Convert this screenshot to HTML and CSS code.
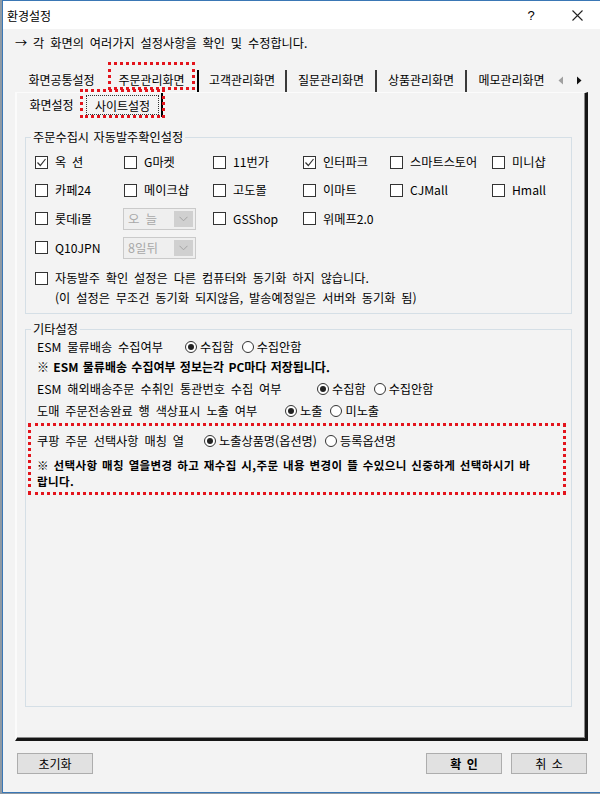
FILE: index.html
```html
<!DOCTYPE html>
<html lang="ko">
<head>
    <meta charset="UTF-8">
    <meta name="viewport" content="width=device-width, initial-scale=1.0">
    <title>환경설정</title>
    <link rel="stylesheet" href="styles.css">
</head>
<body>
<div class="window">
    <div class="titlebar">
        <span class="title">환경설정</span>
        <span class="cap-btn help">?</span>
        <span class="cap-btn close">
            <svg width="11" height="11" viewBox="0 0 11 11"><path d="M0.5 0.5L10.5 10.5M10.5 0.5L0.5 10.5" stroke="#222" stroke-width="1.1" fill="none"/></svg>
        </span>
    </div>

    <div class="desc">→ 각 화면의 여러가지 설정사항을 확인 및 수정합니다.</div>

    <div class="tabs-main">
        <div class="tab t1">화면공통설정</div>
        <div class="tab t2 selected marked">주문관리화면</div>
        <div class="tab t3 sep">고객관리화면</div>
        <div class="tab t4 sep">질문관리화면</div>
        <div class="tab t5 sep">상품관리화면</div>
        <div class="tab t6">메모관리화면</div>
        <div class="tab-scroll">
            <svg width="6" height="9" viewBox="0 0 6 9"><path d="M5 0.5V8.5L0.5 4.5Z" fill="#a0a0a0"/></svg>
            <svg width="6" height="9" viewBox="0 0 6 9"><path d="M1 0.5V8.5L5.5 4.5Z" fill="#111"/></svg>
        </div>
    </div>

    <div class="panel">
        <div class="tabs-sub">
            <div class="subtab s1">화면설정</div>
            <div class="subtab s2 selected marked"><span class="focus">사이트설정</span></div>
        </div>

        <fieldset class="group group-auto">
            <legend>주문수집시 자동발주확인설정</legend>
            <div class="mall-grid">
                <label class="chk"><span class="box"><svg width="11" height="11" viewBox="0 0 11 11"><path d="M1.5 5.5L4.3 8.5L9.5 2" stroke="#333" stroke-width="1.2" fill="none"/></svg></span>옥 션</label>
                <label class="chk"><span class="box"></span>G마켓</label>
                <label class="chk"><span class="box"></span>11번가</label>
                <label class="chk"><span class="box"><svg width="11" height="11" viewBox="0 0 11 11"><path d="M1.5 5.5L4.3 8.5L9.5 2" stroke="#333" stroke-width="1.2" fill="none"/></svg></span>인터파크</label>
                <label class="chk"><span class="box"></span>스마트스토어</label>
                <label class="chk"><span class="box"></span>미니샵</label>

                <label class="chk"><span class="box"></span>카페24</label>
                <label class="chk"><span class="box"></span>메이크샵</label>
                <label class="chk"><span class="box"></span>고도몰</label>
                <label class="chk"><span class="box"></span>이마트</label>
                <label class="chk"><span class="box"></span>CJMall</label>
                <label class="chk"><span class="box"></span>Hmall</label>

                <label class="chk"><span class="box"></span>롯데i몰</label>
                <div class="combo"><span class="val">오 늘</span><span class="arrow"><svg width="9" height="6" viewBox="0 0 9 6"><path d="M0.5 0.8L4.5 4.8L8.5 0.8" stroke="#a3a3a3" fill="none"/></svg></span></div>
                <label class="chk"><span class="box"></span>GSShop</label>
                <label class="chk"><span class="box"></span>위메프2.0</label>
                <span></span>
                <span></span>

                <label class="chk"><span class="box"></span>Q10JPN</label>
                <div class="combo"><span class="val">8일뒤</span><span class="arrow"><svg width="9" height="6" viewBox="0 0 9 6"><path d="M0.5 0.8L4.5 4.8L8.5 0.8" stroke="#a3a3a3" fill="none"/></svg></span></div>
            </div>
            <div class="sync-note">
                <label class="chk"><span class="box"></span>자동발주 확인 설정은 다른 컴퓨터와 동기화 하지 않습니다.</label>
                <div class="sub-text">(이 설정은 무조건 동기화 되지않음, 발송예정일은 서버와 동기화 됨)</div>
            </div>
        </fieldset>

        <fieldset class="group group-etc">
            <legend>기타설정</legend>
            <div class="opt-row row-esm">
                <span class="opt-label w-esm">ESM 물류배송 수집여부</span>
                <span class="radio on"></span><span class="opt">수집함</span>
                <span class="radio"></span><span class="opt">수집안함</span>
            </div>
            <div class="note note-esm">※ ESM 물류배송 수집여부 정보는각 PC마다 저장됩니다.</div>
            <div class="opt-row row-tall">
                <span class="opt-label w-abroad">ESM 해외배송주문 수취인 통관번호 수집 여부</span>
                <span class="radio on"></span><span class="opt">수집함</span>
                <span class="radio"></span><span class="opt">수집안함</span>
            </div>
            <div class="opt-row row-tall">
                <span class="opt-label w-wholesale">도매 주문전송완료 행 색상표시 노출 여부</span>
                <span class="radio on"></span><span class="opt">노출</span>
                <span class="radio"></span><span class="opt">미노출</span>
            </div>
            <div class="marked-box">
                <div class="opt-row row-tall">
                    <span class="opt-label w-coupang">쿠팡 주문 선택사항 매칭 열</span>
                    <span class="radio on"></span><span class="opt">노출상품명(옵션명)</span>
                    <span class="radio"></span><span class="opt">등록옵션명</span>
                </div>
                <div class="note note-coupang">※ 선택사항 매칭 열을변경 하고 재수집 시,주문 내용 변경이 뜰 수있으니 신중하게 선택하시기 바<br>랍니다.</div>
            </div>
        </fieldset>
    </div>

    <div class="footer">
        <button type="button" class="btn">초기화</button>
        <div class="btn-group">
            <button type="button" class="btn btn-ok">확 인</button>
            <button type="button" class="btn">취 소</button>
        </div>
    </div>
</div>
</body>
</html>
```

FILE: styles.css
```css
* {
    box-sizing: border-box;
}

html, body {
    margin: 0;
    padding: 0;
}

body {
    width: 600px;
    height: 794px;
    overflow: hidden;
    background: #8e9aa5;
    font-family: "Noto Sans CJK KR", "Noto Sans", sans-serif;
    font-size: 12.2px;
    word-spacing: 2.5px;
    color: #000;
}

.window {
    margin-left: 2px;
    width: 598px;
    height: 793px;
    border: 1px solid #3a77b5;
    border-right: none;
    background: #f3f3f3;
    display: flex;
    flex-direction: column;
}

/* title bar */
.titlebar {
    height: 28px;
    background: #fff;
    display: flex;
    align-items: center;
    flex-shrink: 0;
}
.title {
    padding-left: 4px;
    font-size: 12px;
}
.cap-btn {
    width: 46px;
    height: 28px;
    display: flex;
    align-items: center;
    justify-content: center;
}
.help {
    margin-left: auto;
    font-family: "Liberation Sans", sans-serif;
    font-size: 13px;
}

.desc {
    margin-top: 5px;
    padding-left: 12px;
    line-height: 18px;
}

/* top tabs */
.tabs-main {
    margin-top: 18px;
    margin-left: 14px;
    height: 22px;
    display: flex;
    flex-shrink: 0;
}
.tab {
    position: relative;
    height: 22px;
    line-height: 20px;
    text-align: center;
    font-size: 12px;
}
.t1 { width: 89px; }
.t2 { width: 93px; }
.t3 { width: 88px; }
.t4 { width: 90px; }
.t5 { width: 90px; }
.t6 { width: 89px; }
.tab.sep {
    border-right: 2px solid #3a3a3a;
}
.tab.selected {
    border-right: 2px solid #000;
}
.tab.marked::after {
    content: "";
    position: absolute;
    left: 2px;
    right: 2px;
    top: -8px;
    bottom: 2px;
    border: 3px dotted #e3141c;
}
.tab-scroll {
    display: flex;
    align-items: center;
    gap: 12px;
    margin-left: 2px;
    padding-bottom: 1px;
}

/* tab page */
.panel {
    flex: 1;
    margin-left: 12px;
    width: 573px;
    border-top: 1px solid #fbfbfb;
    border-left: 2px solid #fbfbfb;
    border-right: 3px solid #161616;
    border-bottom: 3px solid #161616;
    box-shadow: inset -1px -1px 0 #8a8a8a;
    display: flex;
    flex-direction: column;
}

.tabs-sub {
    height: 24px;
    display: flex;
    flex-shrink: 0;
}
.subtab {
    position: relative;
    height: 24px;
    line-height: 24px;
    text-align: center;
    font-size: 12px;
}
.s1 { width: 69px; }
.s2 {
    width: 77px;
    padding: 2px 2px 1px 0;
    line-height: 19px;
}
.subtab.selected {
    border-right: 2px solid #000;
}
.focus {
    display: block;
    height: 20px;
    border: 1px dotted #333;
}
.subtab.marked::after {
    content: "";
    position: absolute;
    left: -6px;
    right: -4px;
    top: -4px;
    bottom: -1px;
    border: 3px dotted #e3141c;
}

/* group boxes */
.group {
    margin: 0 0 0 8px;
    width: 547px;
    padding: 0;
    border: 1px solid #d5dfe6;
    min-width: 0;
}
.group legend {
    margin-left: 5px;
    padding: 0 2px;
    line-height: 16px;
    word-spacing: 1px;
}
.group-auto {
    margin-top: 12px;
    padding-bottom: 5px;
}
.group-etc {
    margin-top: 7px;
    margin-bottom: 31px;
    flex: 1;
    padding-left: 11px;
}
.group-etc legend {
    margin-left: -6px;
}

.mall-grid {
    margin: 3px 0 0 9px;
    display: grid;
    grid-template-columns: 89px 89px 90px 87px 102px auto;
    grid-template-rows: 28px 28px 29px 29px;
    align-items: center;
}

.chk {
    display: flex;
    align-items: center;
    gap: 7px;
    white-space: nowrap;
}
.box {
    width: 13px;
    height: 13px;
    border: 1px solid #333;
    background: #fff;
    display: flex;
    align-items: center;
    justify-content: center;
    flex-shrink: 0;
}

.combo {
    width: 73px;
    height: 22px;
    margin-left: -1px;
    border: 1px solid #cacaca;
    background: #efefef;
    display: flex;
    align-items: center;
    color: #a8a8a8;
}
.combo .val {
    flex: 1;
    padding-left: 4px;
    font-size: 12.5px;
}
.combo .arrow {
    width: 19px;
    height: 16px;
    margin-right: 2px;
    background: #d0d0d0;
    display: flex;
    align-items: center;
    justify-content: center;
}

.sync-note {
    margin: 6px 0 0 9px;
    line-height: 20px;
}
.sub-text {
    padding-left: 20px;
    white-space: nowrap;
}

/* other settings */
.opt-row {
    display: flex;
    align-items: center;
    height: 20px;
    white-space: nowrap;
}
.row-tall {
    height: 22px;
}
.row-esm + .note-esm + .row-tall {
    margin-top: 1px;
}
.opt-label {
    display: inline-block;
}
.w-esm { width: 148px; }
.w-abroad { width: 280px; }
.w-wholesale { width: 248px; }
.w-coupang { width: 167px; }

.radio {
    width: 12px;
    height: 12px;
    border: 1px solid #333;
    border-radius: 50%;
    background: #fff;
    margin-right: 3px;
    display: flex;
    align-items: center;
    justify-content: center;
    flex-shrink: 0;
}
.radio.on::before {
    content: "";
    width: 6px;
    height: 6px;
    border-radius: 50%;
    background: #222;
}
.opt {
    margin-right: 8px;
}

.note {
    font-weight: bold;
    font-size: 12px;
    word-spacing: 1px;
    white-space: nowrap;
}
.note-esm {
    line-height: 20px;
}

.marked-box {
    margin: 1px 0 0 -9px;
    width: 538px;
    border: 3px dotted #e3141c;
    padding: 4px 0 3px 6px;
}
.note-coupang {
    margin-top: 5px;
    font-size: 11.5px;
    letter-spacing: 0.4px;
    line-height: 16px;
}

/* bottom buttons */
.footer {
    height: 51px;
    flex-shrink: 0;
    display: flex;
    align-items: flex-start;
    padding: 12px 13px 0 14px;
}
.btn {
    width: 76px;
    height: 21px;
    padding: 0;
    border: 1px solid #adadad;
    background: #e1e1e1;
    font-family: inherit;
    font-size: 12px;
    word-spacing: 2px;
    color: #000;
}
.btn-ok {
    font-weight: bold;
}
.btn-group {
    margin-left: auto;
    display: flex;
    gap: 9px;
}
```
